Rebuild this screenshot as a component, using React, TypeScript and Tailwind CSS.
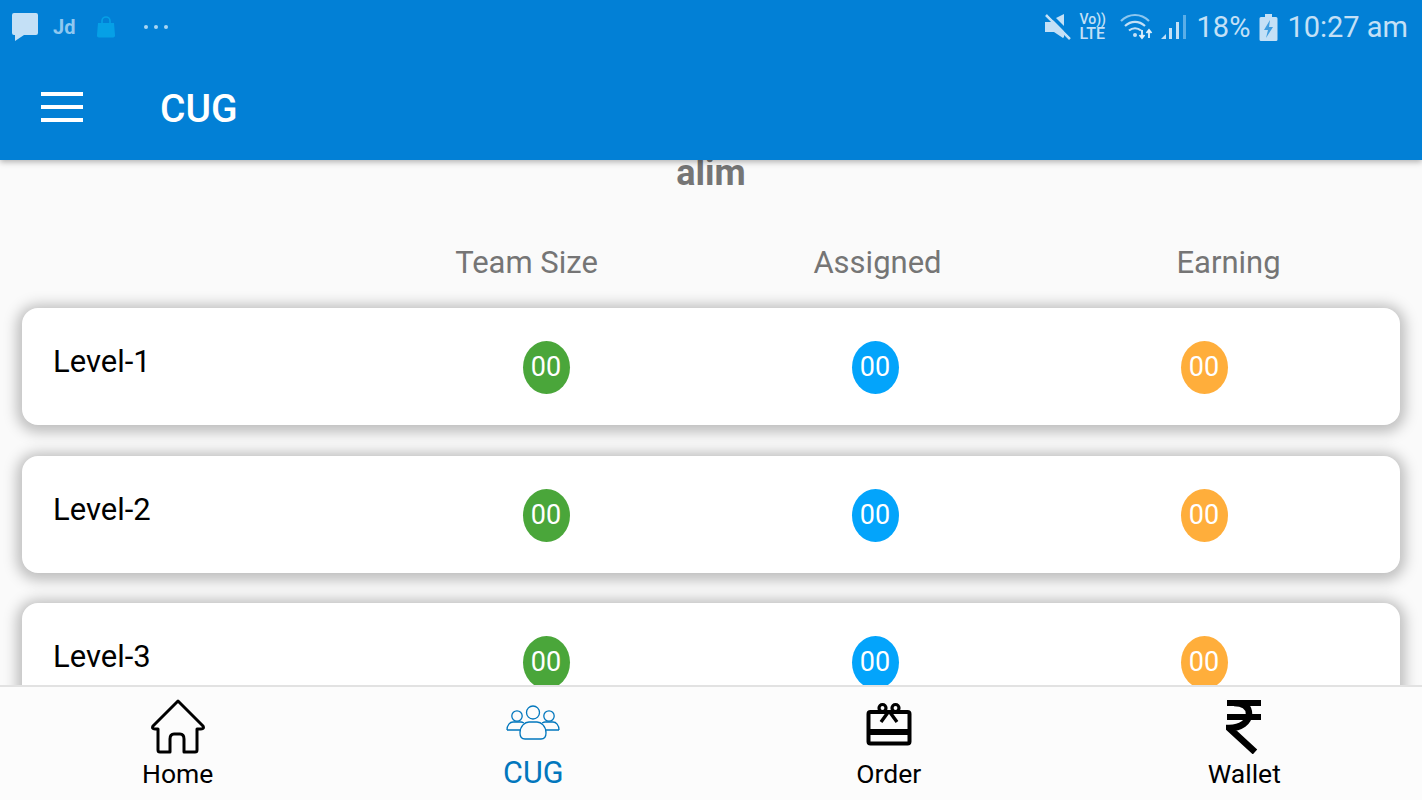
import React from "react";

const font = { fontFamily: "Roboto, sans-serif" };

function Chat() {
  return (
    <svg width="28" height="30" viewBox="0 0 28 30" className="shrink-0">
      <path d="M3 1h22a2 2 0 0 1 2 2v18a2 2 0 0 1-2 2H13l-9 6v-6H3a2 2 0 0 1-2-2V3a2 2 0 0 1 2-2z" fill="#c4e0f6" />
    </svg>
  );
}
function Bag() {
  return (
    <svg width="20" height="22" viewBox="0 0 20 22" className="shrink-0">
      <path d="M6 8V5a4 4 0 0 1 8 0v3" fill="none" stroke="#06a0e6" strokeWidth="1.6" />
      <path d="M2 7h16l1 12a2 2 0 0 1-2 2.5H3A2 2 0 0 1 1 19z" fill="#06a0e6" />
    </svg>
  );
}
function Mute() {
  return (
    <svg width="28" height="28" viewBox="0 0 28 28" className="shrink-0">
      <path d="M1 9h6l3-2 10 11v6l-1 1-9-6H1z" fill="#c4e0f6" />
      <path d="M12 5l8-4v12z" fill="#c4e0f6" />
      <path d="M2 2l24 24" stroke="#c4e0f6" strokeWidth="2.6" />
      <path d="M4 1l24 24" stroke="#0280d6" strokeWidth="1.5" />
    </svg>
  );
}
function Wifi() {
  return (
    <svg width="34" height="28" viewBox="0 0 34 28" className="shrink-0">
      <g fill="none" strokeWidth="2.200">
        <path d="M1 8c8-8 20-8 28 0" stroke="#8cc6ef" />
        <path d="M5 13c6-5.500 14-5.500 20 0" stroke="#c4e0f6" />
        <path d="M9 17.500c3.500-3 8.500-3 12 0" stroke="#c4e0f6" />
      </g>
      <circle cx="15" cy="22" r="2" fill="#c4e0f6" />
      <path d="M22 17v8M19.500 22l2.500 3 2.500-3M29 25v-8M26.500 20l2.500-3 2.500 3" fill="none" stroke="#e3f1fb" strokeWidth="1.8" />
    </svg>
  );
}
function Signal() {
  return (
    <svg width="27" height="28" viewBox="0 0 27 28" className="shrink-0">
      <path d="M1 26l5-5v5z" fill="#c4e0f6" />
      <rect x="9" y="15" width="3" height="11" fill="#c4e0f6" />
      <rect x="16" y="9" width="3" height="17" fill="#c4e0f6" />
      <rect x="23" y="2" width="3" height="24" fill="#5aaee8" />
    </svg>
  );
}
function Battery() {
  return (
    <svg width="19" height="28" viewBox="0 0 19 28" className="shrink-0">
      <path d="M6 1h7v3h4a1.500 1.500 0 0 1 1.500 1.500v21a1.500 1.500 0 0 1-1.500 1.500H2a1.500 1.500 0 0 1-1.500-1.500v-21A1.500 1.500 0 0 1 2 4h4z" fill="#c4e0f6" />
      <path d="M11 7l-6 10h4l-2 8 7-11h-4z" fill="#3f9de0" />
    </svg>
  );
}
function Home() {
  return (
    <svg width="56" height="56" viewBox="0 0 56 56" className="shrink-0">
      <path d="M28 2 L3 27 Q1.500 30 5 30 H8 V51 Q8 53 10 53 H20 V40 Q20 35 24 35 H30 Q34 35 34 40 V53 H45 Q47 53 47 51 V30 H51 Q54.500 30 53 27 Z" fill="none" stroke="#000" strokeWidth="3" strokeLinejoin="round" />
    </svg>
  );
}
function Team() {
  const c = "#0277bd";
  return (
    <svg width="54" height="36" viewBox="0 0 54 36" className="shrink-0">
      <g fill="none" stroke={c} strokeWidth="1.300">
        <circle cx="27" cy="7.500" r="6.500" />
        <circle cx="11" cy="11" r="5.200" />
        <circle cx="43" cy="11" r="5.200" />
        <path d="M1 25c0-5 3-8 6-8h8c1 0 2 .5 3 1M53 25c0-5-3-8-6-8h-8c-1 0-2 .5-3 1M1 25h13M53 25H40" />
        <path d="M14 28c0-7 5-11 9-11h8c4 0 9 4 9 11 0 4-2 6-5 6H19c-3 0-5-2-5-6z" />
      </g>
    </svg>
  );
}
function Gift() {
  return (
    <svg width="46" height="44" viewBox="0 0 46 44" className="shrink-0">
      <g fill="none" stroke="#000" strokeWidth="4">
        <rect x="2.500" y="10" width="41" height="31.500" rx="2" />
        <path d="M2 30h41" strokeWidth="6" />
        <circle cx="16.500" cy="6" r="3.500" strokeWidth="3.200" />
        <circle cx="29.500" cy="6" r="3.500" strokeWidth="3.200" />
        <path d="M23 9l-8 11M23 9l8 11" strokeWidth="3.400" />
      </g>
    </svg>
  );
}
function Rupee() {
  return (
    <svg width="36" height="54" viewBox="0 0 36 54" className="shrink-0">
      <g fill="none" stroke="#000" strokeWidth="6">
        <path d="M1 3h34M1 17h34" />
        <path d="M8 3c9 0 15 3 15 11 0 8-8 14-20 14l26 24" strokeLinejoin="miter" strokeWidth="6.500" />
      </g>
    </svg>
  );
}

function Dot({ color }: { color: string }) {
  return (
    <div className="flex justify-center">
      <div className={`w-[47px] h-[53px] rounded-[50%] flex items-center justify-center text-white text-[27px] font-normal ${color}`}>00</div>
    </div>
  );
}

function Card({ label }: { label: string }) {
  return (
    <div className="h-[117px] shrink-0 mb-[30.5px] rounded-[16px] bg-white shadow-[0_2px_14px_5px_rgba(0,0,0,0.25)] pl-[31px] grid grid-cols-[328.5px_329px_329px_329px]">
      <div className="text-[31px] text-black leading-[34px] pt-[37px]">{label}</div>
      <div className="pt-[33px]"><Dot color="bg-[#4aa63a]" /></div>
      <div className="pt-[33px]"><Dot color="bg-[#03a4fb]" /></div>
      <div className="pt-[33px]"><Dot color="bg-[#ffae3b]" /></div>
    </div>
  );
}

function Tab({ icon, label, active, iconClass }: { icon: React.ReactNode; label: string; active?: boolean; iconClass?: string }) {
  return (
    <div className="flex flex-col items-center">
      <div className={`h-[58px] flex items-center justify-center ${iconClass ?? ""}`}>{icon}</div>
      <div className={active ? "text-[#0277bd] text-[30.500px] leading-[32px] mt-[1px]" : "text-black text-[26.500px] leading-[32px] mt-[2px]"}>{label}</div>
    </div>
  );
}

export default function App() {
  return (
    <div style={font} className="w-[1422px] h-[800px] overflow-hidden flex flex-col bg-[#fafafa]">
      <header className="relative z-10 h-[160px] shrink-0 bg-[#0280d6] shadow-[0_2px_6px_rgba(0,0,0,0.3)]">
        <div className="h-[54px] flex items-center justify-between pl-[11px] pr-[14px]">
          <div className="flex items-center">
            <Chat />
            <span className="ml-[14px] text-[20px] font-bold text-[#8fc8f0] w-[29px]">Jd</span>
            <span className="ml-[14px]"><Bag /></span>
            <span className="ml-[28px] flex gap-[6px]">
              <i className="block w-[4px] h-[4px] rounded-full bg-[#a9d5f3]" />
              <i className="block w-[4px] h-[4px] rounded-full bg-[#a9d5f3]" />
              <i className="block w-[4px] h-[4px] rounded-full bg-[#a9d5f3]" />
            </span>
          </div>
          <div className="flex items-center text-[#c4e0f6]">
            <Mute />
            <div className="ml-[8px] w-[27px] flex flex-col items-start font-medium">
              <span className="text-[14px] leading-[14px]">Vo))</span>
              <span className="text-[16px] leading-[16px]">LTE</span>
            </div>
            <span className="ml-[13px]"><Wifi /></span>
            <span className="ml-[6px]"><Signal /></span>
            <span className="ml-[10px] text-[29px] leading-[32px]">18%</span>
            <span className="ml-[9px]"><Battery /></span>
            <span className="ml-[9px] text-[29px] leading-[32px]">10:27 am</span>
          </div>
        </div>
        <div className="h-[106px] flex items-center pl-[41px]">
          <div className="w-[42px] flex flex-col gap-[9px]">
            <div className="h-[4px] bg-white" />
            <div className="h-[4px] bg-white" />
            <div className="h-[4px] bg-white" />
          </div>
          <div className="ml-[77px] pt-[3px] text-white text-[39px] font-medium leading-[40px]">CUG</div>
        </div>
      </header>

      <main className="flex-1 min-h-0 overflow-hidden">
        <div className="text-center text-[36px] font-bold text-[#757575] leading-[40px] mt-[-7px]">alim</div>
        <div className="mt-[50px] grid grid-cols-[351px_351px_351px_351px] text-[#757575] text-[31px] leading-[40px]">
          <div />
          <div className="text-center">Team Size</div>
          <div className="text-center">Assigned</div>
          <div className="text-center">Earning</div>
        </div>
        <div className="mt-[25px] px-[22px] flex flex-col">
          <Card label="Level-1" />
          <Card label="Level-2" />
          <Card label="Level-3" />
        </div>
      </main>

      <nav className="relative z-10 h-[115px] shrink-0 bg-[#fcfcfc] border-t-2 border-[#e2e2e2] grid grid-cols-4 pt-[11px]">
        <Tab icon={<Home />} label="Home" />
        <Tab icon={<Team />} label="CUG" active iconClass="pb-[9px]" />
        <Tab icon={<Gift />} label="Order" iconClass="pb-[6px]" />
        <Tab icon={<Rupee />} label="Wallet" />
      </nav>
    </div>
  );
}
